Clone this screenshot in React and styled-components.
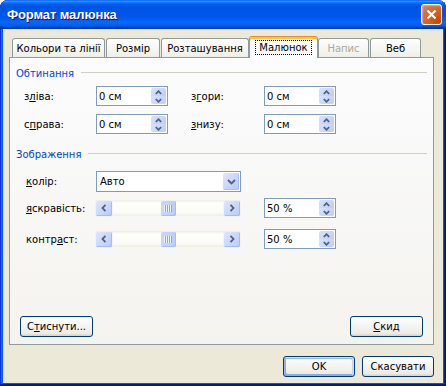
import React from 'react';
import styled, { createGlobalStyle } from 'styled-components';

const GlobalStyle = createGlobalStyle`
  html, body {
    margin: 0;
    padding: 0;
    background: #ffffff;
  }
  body {
    font-family: "DejaVu Sans", Tahoma, sans-serif;
    font-size: 10px;
    color: #000;
  }
  * {
    box-sizing: border-box;
  }
`;

const Frame = styled.div`
  width: 446px;
  height: 386px;
  display: flex;
  flex-direction: column;
  background: #0855dd;
  border-radius: 8px 8px 0 0;
  overflow: hidden;
  box-shadow: inset -1px -1px #00138c, inset 1px 0 #0831d9,
    inset -2px -2px #001ea0, inset 2px 0 #166aee;
`;

const TitleBar = styled.div`
  height: 29px;
  flex: 0 0 29px;
  display: flex;
  align-items: center;
  justify-content: space-between;
  padding: 0 4px 1px 7px;
  border-radius: 8px 8px 0 0;
  background: linear-gradient(
    180deg,
    #0058ee 0%,
    #3593ff 4%,
    #288eff 6%,
    #127dff 8%,
    #036ffc 10%,
    #0262ee 14%,
    #0057e5 20%,
    #0054e3 24%,
    #0055eb 56%,
    #005bf5 66%,
    #026afe 76%,
    #0062ef 86%,
    #0052d6 92%,
    #0040ab 94%,
    #003092 100%
  );
`;

const TitleText = styled.span`
  color: #fff;
  font-family: "Liberation Sans", "DejaVu Sans", sans-serif;
  font-weight: bold;
  font-size: 13px;
  letter-spacing: -0.1px;
  text-shadow: 1px 1px #0f1089;
`;

const CloseButton = styled.div`
  width: 21px;
  height: 21px;
  border: 1px solid #fff;
  border-radius: 3px;
  display: flex;
  align-items: center;
  justify-content: center;
  background: radial-gradient(circle at 90% 90%, #cc4600 0%, #dc6527 55%, #cd7546 70%, #e88060 100%);
  box-shadow: inset 1px 1px 1px #f6a180;
`;

const Client = styled.div`
  flex: 1;
  margin: 0 3px 3px 3px;
  background: #ece9d8;
  display: flex;
  flex-direction: column;
  padding: 7px 0 0 6px;
`;

const TabStrip = styled.div`
  height: 21px;
  display: flex;
  align-items: flex-end;
  gap: 1px;
  padding-left: 3px;
`;

const Tab = styled.div`
  width: ${p => p.$width}px;
  height: ${p => (p.$active ? 22 : 19)}px;
  margin: ${p => (p.$active ? '0 -1px -1px -1px' : '0')};
  position: relative;
  z-index: ${p => (p.$active ? 2 : 0)};
  display: flex;
  align-items: center;
  justify-content: center;
  padding-bottom: ${p => (p.$active ? 1 : 0)}px;
  white-space: nowrap;
  color: ${p => (p.$disabled ? '#aca899' : '#000')};
  border: 1px solid #919b9c;
  border-bottom: none;
  border-radius: 3px 3px 0 0;
  background: ${p =>
    p.$active
      ? '#fcfcfe'
      : 'linear-gradient(180deg, #fff, #fafaf9 26%, #f0f0ea 95%, #ecebe5)'};
  ${p =>
    p.$active &&
    `
    border-top: 1px solid #e68b2c;
    box-shadow: inset 0 2px #ffc83c;
  `}
`;

const FocusText = styled.span`
  border: 1px dotted #000;
  padding: 1px 3px;
`;

const Panel = styled.div`
  width: 425px;
  height: 288px;
  display: flex;
  flex-direction: column;
  border: 1px solid #919b9c;
  background: linear-gradient(180deg, #fcfcfe, #f4f3ee);
  padding: 0 6px 7px 6px;
`;

const GroupHeader = styled.div`
  height: 14px;
  margin-top: ${p => p.$top}px;
  display: flex;
  align-items: center;
  gap: 7px;
  color: #0046d5;
`;

const GroupLine = styled.div`
  flex: 1;
  height: 1px;
  background: #d0d0bf;
  margin-top: -1px;
`;

const Row = styled.div`
  display: flex;
  align-items: center;
  margin-top: ${p => p.$top}px;
  padding-left: ${p => p.$indent}px;
`;

const FieldLabel = styled.span`
  width: ${p => p.$width}px;
  margin-left: ${p => p.$offset || 0}px;
  white-space: nowrap;
`;

const SpinBox = styled.div`
  width: 72px;
  height: 20px;
  margin-left: ${p => p.$offset || 0}px;
  border: 1px solid #7f9db9;
  background: #fff;
  display: flex;
  align-items: stretch;
`;

const FieldValue = styled.span`
  flex: 1;
  display: flex;
  align-items: center;
  padding-left: 2px;
`;

const SpinButtons = styled.div`
  width: 15px;
  margin: 1px;
  display: flex;
  flex-direction: column;
`;

const SpinHalf = styled.div`
  flex: 1;
  display: flex;
  align-items: center;
  justify-content: center;
  background: linear-gradient(135deg, #d9e3fc, #bccdf7);
  border-radius: ${p => (p.$up ? '2px 2px 0 0' : '0 0 2px 2px')};
`;

const Select = styled.div`
  width: 145px;
  height: 21px;
  border: 1px solid #7f9db9;
  background: #fff;
  display: flex;
  align-items: stretch;
`;

const SelectValue = styled.span`
  flex: 1;
  display: flex;
  align-items: center;
  padding-left: 3px;
`;

const SelectButton = styled.div`
  width: 16px;
  margin: 1px;
  border-radius: 2px;
  display: flex;
  align-items: center;
  justify-content: center;
  background: linear-gradient(135deg, #dde6fd, #b7c9f6);
  box-shadow: inset -1px -1px #a9bdf0;
`;

const Slider = styled.div`
  width: 144px;
  height: 16px;
  display: flex;
  align-items: center;
  background: linear-gradient(180deg, #eeede5, #fefefb 20%, #fbfbf7 80%, #eeede5);
`;

const ScrollButton = styled.div`
  width: 16px;
  height: 15px;
  border-radius: 2px;
  display: flex;
  align-items: center;
  justify-content: center;
  background: linear-gradient(135deg, #dde6fd, #b9cbf7);
  box-shadow: inset -1px -1px #a6bbf0, 0 0 0 0.5px #e6edfd;
`;

const Track = styled.div`
  flex: 1;
`;

const Thumb = styled.div`
  width: 15px;
  height: 15px;
  border-radius: 2px;
  display: flex;
  align-items: center;
  justify-content: center;
  background: linear-gradient(90deg, #c8d7fb, #bccdf7);
  box-shadow: inset -1px -1px #a6bbf0;
`;

const Grip = styled.div`
  width: 8px;
  height: 7px;
  background: repeating-linear-gradient(90deg, #eef4fe 0 1px, #8aa6e8 1px 2px);
`;

const PanelButtons = styled.div`
  margin-top: auto;
  display: flex;
  justify-content: space-between;
  padding: 0 4px;
`;

const PushButton = styled.div`
  width: ${p => p.$width || 73}px;
  height: 21px;
  display: flex;
  align-items: center;
  justify-content: center;
  white-space: nowrap;
  border: 1px solid #003c74;
  border-radius: 3px;
  background: linear-gradient(180deg, #fff, #ecebe6 86%, #d6d0c5);
  box-shadow: ${p =>
    p.$default
      ? 'inset -1px 1px #cee7ff, inset 1px 2px #98b8ea, inset -2px 2px #bcd4f6, inset 1px -1px #89ade4, inset 2px -2px #89ade4'
      : 'none'};
`;

const Footer = styled.div`
  margin-top: 11px;
  width: 425px;
  display: flex;
  justify-content: flex-end;
  gap: 7px;
`;

const Chevron = ({ dir }) => {
  const paths = {
    up: { vb: '0 0 7 5', d: 'M0.8 4 L3.5 1.2 L6.2 4', w: 7, h: 5 },
    down: { vb: '0 0 7 5', d: 'M0.8 1 L3.5 3.8 L6.2 1', w: 7, h: 5 },
    left: { vb: '0 0 6 8', d: 'M4.5 0.8 L1.5 4 L4.5 7.2', w: 6, h: 8 },
    right: { vb: '0 0 6 8', d: 'M1.5 0.8 L4.5 4 L1.5 7.2', w: 6, h: 8 },
    drop: { vb: '0 0 9 6', d: 'M1 1 L4.5 4.5 L8 1', w: 9, h: 6 },
  };
  const p = paths[dir];
  return (
    <svg width={p.w} height={p.h} viewBox={p.vb}>
      <path d={p.d} fill="none" stroke="#4d6185" strokeWidth="1.8" />
    </svg>
  );
};

const Spin = ({ value, offset }) => (
  <SpinBox $offset={offset}>
    <FieldValue>{value}</FieldValue>
    <SpinButtons>
      <SpinHalf $up>
        <Chevron dir="up" />
      </SpinHalf>
      <SpinHalf>
        <Chevron dir="down" />
      </SpinHalf>
    </SpinButtons>
  </SpinBox>
);

const ScrollSlider = () => (
  <Slider>
    <ScrollButton>
      <Chevron dir="left" />
    </ScrollButton>
    <Track />
    <Thumb>
      <Grip />
    </Thumb>
    <Track />
    <ScrollButton>
      <Chevron dir="right" />
    </ScrollButton>
  </Slider>
);

const tabs = [
  { label: 'Кольори та лінії', width: 93 },
  { label: 'Розмір', width: 54 },
  { label: 'Розташування', width: 88 },
  { label: 'Малюнок', width: 69, active: true },
  { label: 'Напис', width: 51, disabled: true },
  { label: 'Веб', width: 51 },
];

export default function App() {
  return (
    <>
      <GlobalStyle />
      <Frame>
        <TitleBar>
          <TitleText>Формат малюнка</TitleText>
          <CloseButton>
            <svg width="11" height="11" viewBox="0 0 11 11">
              <path d="M1.5 1.5 L9.5 9.5 M9.5 1.5 L1.5 9.5" stroke="#fff" strokeWidth="2.2" />
            </svg>
          </CloseButton>
        </TitleBar>
        <Client>
          <TabStrip>
            {tabs.map(t => (
              <Tab key={t.label} $width={t.width} $active={t.active} $disabled={t.disabled}>
                {t.active ? <FocusText>{t.label}</FocusText> : t.label}
              </Tab>
            ))}
          </TabStrip>
          <Panel>
            <GroupHeader $top={8}>
              <span>Обтинання</span>
              <GroupLine />
            </GroupHeader>
            <Row $top={6} $indent={8}>
              <FieldLabel $width={72}>з<u>л</u>іва:</FieldLabel>
              <Spin value="0 см" />
              <FieldLabel $width={73} $offset={23}>з<u>г</u>ори:</FieldLabel>
              <Spin value="0 см" />
            </Row>
            <Row $top={8} $indent={8}>
              <FieldLabel $width={72}>с<u>п</u>рава:</FieldLabel>
              <Spin value="0 см" />
              <FieldLabel $width={73} $offset={23}><u>з</u>низу:</FieldLabel>
              <Spin value="0 см" />
            </Row>

            <GroupHeader $top={13}>
              <span>Зображення</span>
              <GroupLine />
            </GroupHeader>
            <Row $top={10} $indent={10}>
              <FieldLabel $width={70}><u>к</u>олір:</FieldLabel>
              <Select>
                <SelectValue>Авто</SelectValue>
                <SelectButton>
                  <Chevron dir="drop" />
                </SelectButton>
              </Select>
            </Row>
            <Row $top={6} $indent={10}>
              <FieldLabel $width={70}><u>я</u>скравість:</FieldLabel>
              <ScrollSlider />
              <Spin value="50 %" offset={24} />
            </Row>
            <Row $top={11} $indent={10}>
              <FieldLabel $width={70}>контр<u>а</u>ст:</FieldLabel>
              <ScrollSlider />
              <Spin value="50 %" offset={24} />
            </Row>

            <PanelButtons>
              <PushButton>С<u>т</u>иснути...</PushButton>
              <PushButton><u>С</u>кид</PushButton>
            </PanelButtons>
          </Panel>
          <Footer>
            <PushButton $width={72} $default>OK</PushButton>
            <PushButton $width={72}>Скасувати</PushButton>
          </Footer>
        </Client>
      </Frame>
    </>
  );
}
